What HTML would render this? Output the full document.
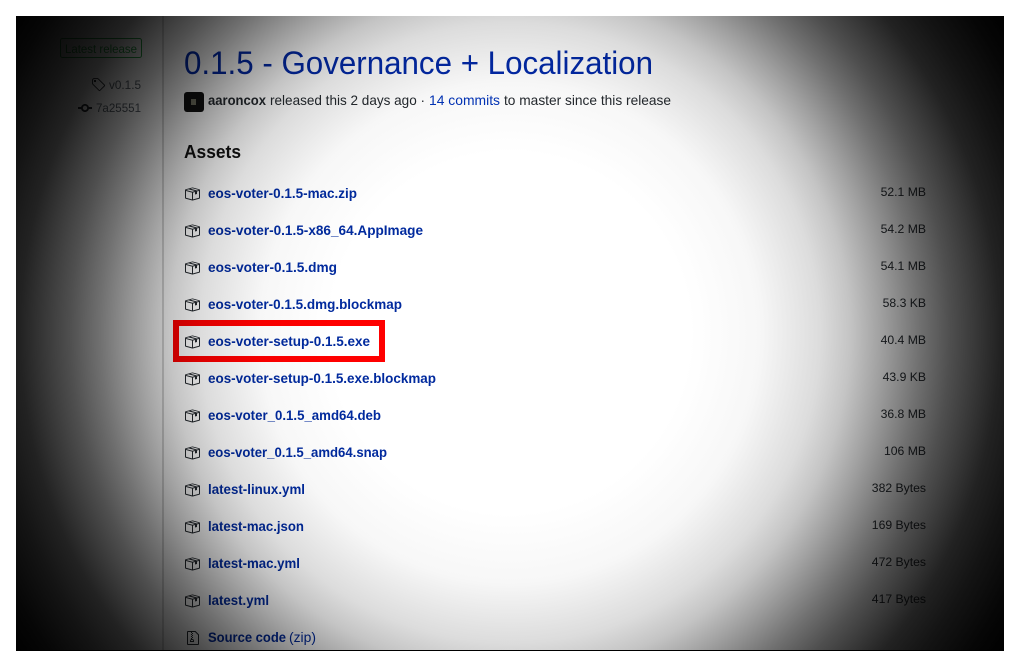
<!DOCTYPE html>
<html><head><meta charset="utf-8"><style>
html,body{margin:0;padding:0;background:#fff;width:1020px;height:667px;overflow:hidden}
svg{position:absolute;left:0;top:0}
text{font-family:"Liberation Sans",Arial,sans-serif;font-size:14px}
.l{font-weight:bold;fill:#012a9e}
.s{font-size:12.2px;fill:#24292e;text-anchor:end}
#v{position:absolute;left:16px;top:16px;width:988px;height:635px;mix-blend-mode:multiply;
background:radial-gradient(circle 600px at 494px 317px,#fff 0,#fff 180px,#f7f7f7 250px,#dcdcdc 310px,#c4c4c4 340px,#a1a1a1 370px,#707070 410px,#4f4f4f 440px,#222 490px,#141414 520px,#060606 560px,#000 590px)}
</style></head><body>
<svg width="1020" height="667" viewBox="0 0 1020 667" xmlns="http://www.w3.org/2000/svg">
<defs>
<path id="p" fill="#24292e" d="M1 4.27v7.47c0 .45.3.84.75.97l6.5 1.73c.16.05.34.05.5 0l6.5-1.73c.45-.13.75-.52.75-.97V4.27c0-.45-.3-.84-.75-.97l-6.5-1.74a1.4 1.4 0 0 0-.5 0L1.75 3.3c-.45.13-.75.52-.75.97zm7 9.09l-6-1.59V5l6 1.61v6.75zM2 4l2.5-.67L11 5.06l-2.5.67L2 4zm13 7.77l-6 1.59V6.61l2-.55V8.5l2-.53V5.53L15 5v6.77zm-2-7.24L6.5 2.8l2-.53L15 4l-2 .53z"/>
</defs>
<rect x="16" y="16" width="988" height="635" fill="#fff"/>
<rect x="162" y="16" width="2" height="635" fill="#d6d6d6"/>

<rect x="60.500" y="38.500" width="81" height="19" rx="2" fill="none" stroke="#28a745"/>
<text x="65" y="53" textLength="72" lengthAdjust="spacingAndGlyphs" style="font-size:12px" fill="#28a745">Latest release</text>
<path transform="translate(91,77)" fill="#24292e" d="M7.73 1.73C7.26 1.26 6.62 1 5.96 1H3.5C2.13 1 1 2.13 1 3.5v2.47c0 .66.27 1.3.73 1.77l6.06 6.06c.39.39 1.02.39 1.41 0l4.59-4.59a.996.996 0 0 0 0-1.41L7.73 1.73zM2.38 7.09c-.31-.3-.47-.7-.47-1.13V3.5c0-.88.72-1.59 1.59-1.59h2.47c.42 0 .83.16 1.13.47l6.14 6.13-4.73 4.73-6.13-6.15zM3.01 3h2v2H3V3h.01z"/>
<text x="109" y="89" textLength="32" lengthAdjust="spacingAndGlyphs" style="font-size:12px" fill="#586069">v0.1.5</text>
<path transform="translate(78,100)" fill="#24292e" d="M10.86 7c-.45-1.72-2-3-3.86-3-1.860 0-3.41 1.28-3.86 3H0v2h3.14c.45 1.72 2 3 3.86 3 1.86 0 3.41-1.28 3.86-3H14V7h-3.14zM7 10.2c-1.22 0-2.2-.98-2.2-2.2 0-1.22.98-2.2 2.2-2.2 1.22 0 2.2.98 2.2 2.2 0 1.22-.98 2.2-2.2 2.2z"/>
<text x="96" y="112" textLength="45" lengthAdjust="spacingAndGlyphs" style="font-size:12px" fill="#586069">7a25551</text>

<text x="184" y="74" textLength="469" lengthAdjust="spacingAndGlyphs" style="font-size:32px" fill="#0229a8">0.1.5 - Governance + Localization</text>
<rect x="184" y="92" width="20" height="20" rx="3" fill="#111"/>
<rect x="191" y="99" width="5" height="6" fill="#776"/>
<text x="208" y="105" textLength="58" lengthAdjust="spacingAndGlyphs" font-weight="bold" fill="#24292e">aaroncox</text>
<text x="270" y="105" textLength="155" lengthAdjust="spacingAndGlyphs" fill="#24292e">released this 2 days ago ·</text>
<text x="429" y="105" textLength="71" lengthAdjust="spacingAndGlyphs" fill="#0233b8">14 commits</text>
<text x="504" y="105" textLength="167" lengthAdjust="spacingAndGlyphs" fill="#24292e">to master since this release</text>
<text x="184" y="158" textLength="57" lengthAdjust="spacingAndGlyphs" font-weight="bold" style="font-size:18px" fill="#111">Assets</text>

<use href="#p" x="184" y="186"/><text class="l" x="208" y="198" textLength="149" lengthAdjust="spacingAndGlyphs">eos-voter-0.1.5-mac.zip</text><text class="s" x="926" y="196">52.1 MB</text>
<use href="#p" x="184" y="223"/><text class="l" x="208" y="235" textLength="215" lengthAdjust="spacingAndGlyphs">eos-voter-0.1.5-x86_64.AppImage</text><text class="s" x="926" y="233">54.2 MB</text>
<use href="#p" x="184" y="260"/><text class="l" x="208" y="272" textLength="129" lengthAdjust="spacingAndGlyphs">eos-voter-0.1.5.dmg</text><text class="s" x="926" y="270">54.1 MB</text>
<use href="#p" x="184" y="297"/><text class="l" x="208" y="309" textLength="194" lengthAdjust="spacingAndGlyphs">eos-voter-0.1.5.dmg.blockmap</text><text class="s" x="926" y="307">58.3 KB</text>
<use href="#p" x="184" y="334"/><text class="l" x="208" y="346" textLength="162" lengthAdjust="spacingAndGlyphs">eos-voter-setup-0.1.5.exe</text><text class="s" x="926" y="344">40.4 MB</text>
<use href="#p" x="184" y="371"/><text class="l" x="208" y="383" textLength="228" lengthAdjust="spacingAndGlyphs">eos-voter-setup-0.1.5.exe.blockmap</text><text class="s" x="926" y="381">43.9 KB</text>
<use href="#p" x="184" y="408"/><text class="l" x="208" y="420" textLength="173" lengthAdjust="spacingAndGlyphs">eos-voter_0.1.5_amd64.deb</text><text class="s" x="926" y="418">36.8 MB</text>
<use href="#p" x="184" y="445"/><text class="l" x="208" y="457" textLength="179" lengthAdjust="spacingAndGlyphs">eos-voter_0.1.5_amd64.snap</text><text class="s" x="926" y="455">106 MB</text>
<use href="#p" x="184" y="482"/><text class="l" x="208" y="494" textLength="97" lengthAdjust="spacingAndGlyphs">latest-linux.yml</text><text class="s" x="926" y="492">382 Bytes</text>
<use href="#p" x="184" y="519"/><text class="l" x="208" y="531" textLength="96" lengthAdjust="spacingAndGlyphs">latest-mac.json</text><text class="s" x="926" y="529">169 Bytes</text>
<use href="#p" x="184" y="556"/><text class="l" x="208" y="568" textLength="92" lengthAdjust="spacingAndGlyphs">latest-mac.yml</text><text class="s" x="926" y="566">472 Bytes</text>
<use href="#p" x="184" y="593"/><text class="l" x="208" y="605" textLength="61" lengthAdjust="spacingAndGlyphs">latest.yml</text><text class="s" x="926" y="603">417 Bytes</text>
<path transform="translate(187,630)" fill="#24292e" d="M8.5 1H1a1 1 0 0 0-1 1v12a1 1 0 0 0 1 1h10a1 1 0 0 0 1-1V4.5L8.5 1zM11 14H1V2h3v1h1V2h3l3 3v9zM5 4V3h1v1H5zM4 4h1v1H4V4zm1 2V5h1v1H5zM4 6h1v1H4V6zm1 2V7h1v1H5zM4 9.28A2 2 0 0 0 3 11v1h4v-1a2 2 0 0 0-2-2V8H4v1.28zM6 10v1H4v-1h2z"/>
<text class="l" x="208" y="642" textLength="78" lengthAdjust="spacingAndGlyphs">Source code</text>
<text x="289" y="642" textLength="27" lengthAdjust="spacingAndGlyphs" fill="#012a9e">(zip)</text>

<rect x="176" y="323" width="206" height="36" fill="none" stroke="#f00" stroke-width="6"/>
<rect x="16" y="650" width="988" height="1" fill="#000"/>
</svg>
<div id="v"></div>
</body></html>
